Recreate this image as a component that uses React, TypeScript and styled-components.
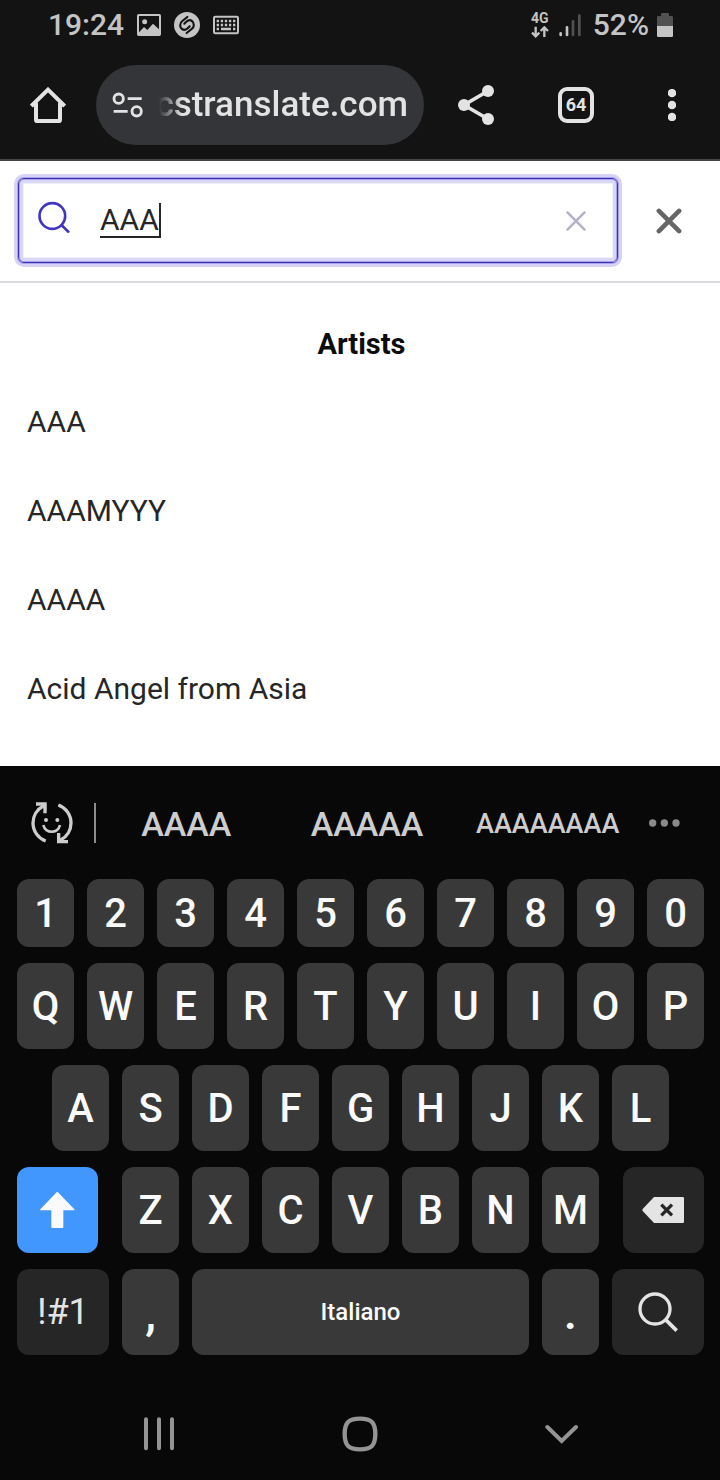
import React, { useState } from "react";
import styled, { createGlobalStyle } from "styled-components";

const GlobalStyle = createGlobalStyle`
  *, *::before, *::after { box-sizing: border-box; }
  body { margin: 0; background: #080808; font-family: Roboto, "Liberation Sans", sans-serif; }
  button, input { font-family: inherit; }
  button { border: 0; padding: 0; background: none; color: inherit; cursor: pointer; }
  svg { display: block; flex: none; }
  h2, ul { margin: 0; padding: 0; }
`;

const Screen = styled.div`
  display: flex;
  flex-direction: column;
  min-height: 100vh;
  background: #fff;
`;

/* Status bar */

const StatusBar = styled.header`
  display: flex;
  align-items: center;
  justify-content: space-between;
  height: 50px;
  padding: 0 47px 0 48px;
  background: #131313;
  color: #c4c4c4;
`;

const StatusGroup = styled.div<{ $gap: number }>`
  display: flex;
  align-items: center;
  gap: ${(p) => p.$gap}px;
`;

const StatusText = styled.span`
  font-size: 30px;
  line-height: 48px;
  font-weight: 500;
`;

const Network = styled.span`
  display: flex;
  flex-direction: column;
  align-items: center;
  gap: 2px;
  font-size: 14px;
  line-height: 12px;
  font-weight: 700;
`;

/* Browser toolbar */

const BrowserBar = styled.nav`
  display: flex;
  align-items: center;
  height: 111px;
  border-bottom: 2px solid #454545;
  background: #131313;
  color: #e3e3e3;
`;

const BarButton = styled.button<{ $width: number }>`
  display: flex;
  align-items: center;
  justify-content: center;
  flex: none;
  width: ${(p) => p.$width}px;
  height: 80px;
`;

const AddressPill = styled.button`
  display: flex;
  align-items: center;
  flex: 1;
  min-width: 0;
  height: 80px;
  padding: 0 16px;
  gap: 9px;
  border-radius: 40px;
  background: #343538;
`;

const Address = styled.span`
  display: flex;
  justify-content: flex-end;
  flex: 1;
  min-width: 0;
  overflow: hidden;
  font-size: 35px;
  line-height: 48px;
  font-weight: 500;
  mask-image: linear-gradient(to right, transparent 7px, #000 30px);
`;

const TabCount = styled.span`
  display: flex;
  align-items: center;
  justify-content: center;
  width: 36px;
  height: 36px;
  border: 4px solid #e3e3e3;
  border-radius: 9px;
  font-size: 18px;
  font-weight: 700;
`;

/* Web page */

const SearchHeader = styled.form`
  display: flex;
  align-items: center;
  height: 122px;
  padding: 0 0 1px 18px;
  border-bottom: 2px solid #dcdce0;
`;

const SearchBox = styled.label`
  display: flex;
  align-items: center;
  flex: 1;
  min-width: 0;
  height: 85px;
  padding: 0 11px 0 19px;
  border: 1px solid #3c31b4;
  border-radius: 6px;
  color: #4036c0;
  box-shadow: 0 0 0 1px #a8a2e8, 0 0 0 4px #d6d3f4,
    inset 0 0 0 1px #a8a2e8, inset 0 0 0 4px #d9d6f6, inset 0 0 0 5px #f0effc;
`;

const SearchInput = styled.input`
  field-sizing: content;
  max-width: 100%;
  height: 35px;
  padding: 0;
  margin-left: 30px;
  border: 0 solid #262626;
  border-width: 0 2px 2px 0;
  outline: 0;
  background: none;
  color: #262626;
  font-size: 30px;
  line-height: 33px;
`;

const ClearButton = styled.button`
  display: flex;
  align-items: center;
  justify-content: center;
  flex: none;
  width: 60px;
  height: 60px;
  margin-left: auto;
  color: #b3b1c9;
`;

const CloseButton = styled(ClearButton)`
  width: 102px;
  color: #666;
`;

const Results = styled.main`
  flex: 1;
  padding: 41px 27px 32px;
`;

const ResultsTitle = styled.h2`
  padding: 0 0 13px 3px;
  color: #0c0c0c;
  font-size: 29px;
  line-height: 40px;
  font-weight: 700;
  text-align: center;
`;

const ResultList = styled.ul`
  list-style: none;
`;

const ResultLink = styled.a`
  display: flex;
  align-items: center;
  min-height: 89px;
  color: #262626;
  font-size: 30px;
  text-decoration: none;
`;

/* Keyboard */

const Keyboard = styled.section`
  padding-bottom: 33px;
  background: #080808;
  color: #fafafa;
`;

const SuggestionBar = styled.div`
  display: flex;
  align-items: center;
  height: 113px;
  padding: 0 30px 0 10px;
  color: #cdcdcd;
`;

const Divider = styled.span`
  width: 2px;
  height: 40px;
  background: #8c8c8c;
`;

const Suggestion = styled.button<{ $compact?: boolean }>`
  flex: 1;
  padding-top: 3px;
  font-size: ${(p) => (p.$compact ? 27 : 34)}px;
  line-height: 48px;
  font-weight: 500;
`;

const Rows = styled.div`
  display: flex;
  flex-direction: column;
  gap: 16px;
  padding: 0 16px 0 17px;
`;

const KeyRow = styled.div<{ $inset?: boolean }>`
  display: flex;
  gap: 13px;
  padding: 0 ${(p) => (p.$inset ? 35 : 0)}px;
`;

type KeyTone = "letter" | "function" | "active";

const keyColors: Record<KeyTone, string> = {
  letter: "#393939",
  function: "#262626",
  active: "#4297ff",
};

const Key = styled.button<{
  $tone?: KeyTone;
  $weight?: number;
  $short?: boolean;
  $size?: number;
}>`
  display: flex;
  align-items: center;
  justify-content: center;
  flex: ${(p) => p.$weight ?? 57} 1 0;
  min-width: 0;
  height: ${(p) => (p.$short ? 68 : 86)}px;
  border-radius: 12px;
  background: ${(p) => keyColors[p.$tone ?? "letter"]};
  color: ${(p) => (p.$tone === "function" ? "#e4e4e4" : "#fafafa")};
  font-size: ${(p) => p.$size ?? 40}px;
  font-weight: ${(p) => (p.$tone === "function" ? 400 : 500)};
`;

const ShiftKey = styled(Key)`
  margin-right: 11px;
`;

const BackspaceKey = styled(Key)`
  margin-left: 11px;
`;

const SystemNav = styled.nav`
  display: flex;
  height: 92px;
  padding: 0 58px;
  background: #080808;
  color: #949494;
`;

const NavButton = styled.button`
  display: flex;
  align-items: center;
  justify-content: center;
  flex: 1;
`;

/* Icons */

const PictureIcon = () => (
  <svg width="24" height="22" viewBox="0 0 72 66" fill="currentColor" aria-hidden="true">
    <path fillRule="evenodd" d="M5 0H67Q72 0 72 5V61Q72 66 67 66H5Q0 66 0 61V5Q0 0 5 0ZM6 6V55L21 39L31 48L48 29L66 46V6Z" />
    <circle cx="23" cy="23" r="7.500" />
  </svg>
);

const ShazamIcon = () => (
  <svg width="26" height="26" viewBox="0 0 78 78" aria-hidden="true">
    <circle cx="39" cy="39" r="39" fill="currentColor" />
    <g fill="none" stroke="#131313" strokeWidth="6.500" strokeLinecap="round">
      <path d="M40 15L25 27C16 34 17 45 24 51C31 56 38 53 43 47L47 43" />
      <path d="M38 63L53 51C62 44 61 33 54 27C47 22 40 25 35 31L31 35" />
    </g>
  </svg>
);

const KeyboardIcon = () => (
  <svg width="26" height="20" viewBox="0 0 78 60" aria-hidden="true">
    <rect x="3" y="5" width="72" height="50" rx="4" fill="none" stroke="currentColor" strokeWidth="6" />
    <path d="M11 18H68M11 30H68" stroke="currentColor" strokeWidth="7" strokeDasharray="7 5.250" />
    <path d="M11 42H18M24 42H54M60 42H67" stroke="currentColor" strokeWidth="7" />
  </svg>
);

const DataArrows = () => (
  <svg width="18" height="12" viewBox="0 0 54 36" fill="none" stroke="currentColor" strokeWidth="7" aria-hidden="true">
    <path d="M14 2V30M3 20L14 31L25 20" />
    <path d="M40 33V6M29 15L40 4L51 15" />
  </svg>
);

const SignalIcon = () => (
  <svg width="22" height="24" viewBox="0 0 66 72" strokeWidth="8" strokeLinecap="round" aria-hidden="true">
    <path d="M5 61V66M24 43V66" stroke="currentColor" />
    <path d="M42 25V66M61 8V66" stroke="#515151" />
  </svg>
);

const BatteryIcon = () => (
  <svg width="16" height="24" viewBox="0 0 48 72" aria-hidden="true">
    <path d="M12 9V3Q12 0 15 0H33Q36 0 36 3V9H44Q48 9 48 13V39H0V13Q0 9 4 9Z" fill="#515151" />
    <path d="M0 39H48V68Q48 72 44 72H4Q0 72 0 68Z" fill="currentColor" />
  </svg>
);

const HomeIcon = () => (
  <svg width="36" height="36" viewBox="0 0 108 108" fill="none" stroke="currentColor" strokeWidth="12" aria-hidden="true">
    <path d="M18 48V98Q18 102 22 102H86Q90 102 90 98V48" />
    <path d="M4 57L54 8L104 57" />
  </svg>
);

const TuneIcon = () => (
  <svg width="31" height="26" viewBox="0 0 93 78" fill="none" stroke="currentColor" strokeWidth="8.500" aria-hidden="true">
    <circle cx="20" cy="20" r="14" />
    <path d="M47 20H89M5 58H47" />
    <circle cx="74" cy="58" r="14" />
  </svg>
);

const ShareIcon = () => (
  <svg width="36" height="40" viewBox="0 0 108 120" fill="currentColor" aria-hidden="true">
    <path d="M90 18L18 60L90 102" fill="none" stroke="currentColor" strokeWidth="11" />
    <circle cx="90" cy="18" r="18" />
    <circle cx="18" cy="60" r="18" />
    <circle cx="90" cy="102" r="18" />
  </svg>
);

const KebabIcon = () => (
  <svg width="8" height="32" viewBox="0 0 24 96" fill="currentColor" aria-hidden="true">
    <circle cx="12" cy="12" r="12.500" />
    <circle cx="12" cy="48" r="12.500" />
    <circle cx="12" cy="84" r="12.500" />
  </svg>
);

const SearchIcon = () => (
  <svg width="32" height="40" viewBox="0 0 96 120" fill="none" stroke="currentColor" strokeWidth="8" strokeLinecap="round" aria-hidden="true">
    <circle cx="43" cy="45" r="38.500" />
    <path d="M71 73L91 92" />
  </svg>
);

const CrossIcon = ({ size, stroke }: { size: number; stroke: number }) => (
  <svg width={size} height={size} viewBox="0 0 72 72" fill="none" stroke="currentColor" strokeWidth={stroke} strokeLinecap="round" aria-hidden="true">
    <path d="M8 8L64 64M64 8L8 64" />
  </svg>
);

const EmojiSwapIcon = () => (
  <svg width="42" height="42" viewBox="0 0 126 126" fill="none" stroke="currentColor" strokeWidth="10" aria-hidden="true">
    <path d="M44 117C22 109 6 88 6 63C6 42 18 22 37 12" />
    <path d="M82 9C104 17 120 38 120 63C120 84 108 104 89 114" />
    <path d="M15 6H42V34" />
    <path d="M26 4H46V26Z" fill="currentColor" stroke="none" />
    <path d="M111 119H83V93" />
    <path d="M79 100V122H99Z" fill="currentColor" stroke="none" />
    <path d="M37 69C43 96 81 96 87 69" strokeWidth="8" />
    <circle cx="45" cy="54" r="6" fill="currentColor" stroke="none" />
    <circle cx="79" cy="54" r="6" fill="currentColor" stroke="none" />
  </svg>
);

const MoreIcon = () => (
  <svg width="31" height="8" viewBox="0 0 93 24" fill="#8a8a8a" aria-hidden="true">
    <circle cx="11" cy="12" r="11" />
    <circle cx="46" cy="12" r="11" />
    <circle cx="81" cy="12" r="11" />
  </svg>
);

const ShiftIcon = () => (
  <svg width="36" height="36" viewBox="0 0 108 108" fill="currentColor" aria-hidden="true">
    <path d="M50 1Q52-1 54 1L103 52Q105 55 102 55H70V105Q70 108 67 108H37Q34 108 34 105V55H2Q-1 55 1 52Z" />
  </svg>
);

const BackspaceIcon = () => (
  <svg width="44" height="26" viewBox="0 0 132 78" aria-hidden="true">
    <path d="M36 0H122Q126 0 126 4V74Q126 78 122 78H36L2 42Q0 39 2 36Z" fill="currentColor" />
    <path d="M58 23L90 55M90 23L58 55" stroke="#262626" strokeWidth="10" />
  </svg>
);

const KeySearchIcon = () => (
  <svg width="40" height="40" viewBox="0 0 120 120" fill="none" stroke="currentColor" strokeWidth="10" aria-hidden="true">
    <circle cx="51" cy="51" r="45" />
    <path d="M82 82L116 116" strokeWidth="11" />
  </svg>
);

const RecentsIcon = () => (
  <svg width="32" height="34" viewBox="0 0 96 102" stroke="currentColor" strokeWidth="12" strokeLinecap="round" aria-hidden="true">
    <path d="M9 7V94M48 7V94M87 7V94" />
  </svg>
);

const HomeSquareIcon = () => (
  <svg width="36" height="36" viewBox="0 0 108 108" fill="none" stroke="currentColor" strokeWidth="13" aria-hidden="true">
    <path d="M54 8C88 8 100 20 100 54S88 100 54 100S8 88 8 54S20 8 54 8Z" />
  </svg>
);

const HideIcon = () => (
  <svg width="34" height="20" viewBox="0 0 102 60" fill="none" stroke="currentColor" strokeWidth="12" strokeLinecap="round" aria-hidden="true">
    <path d="M10 9L53 51L96 9" />
  </svg>
);

const artists = ["AAA", "AAAMYYY", "AAAA", "Acid Angel from Asia"];

export default function App() {
  const [query, setQuery] = useState("AAA");
  const type = (character: string) => () => setQuery((q) => q + character);
  const letters = (row: string) =>
    row.split("").map((letter) => (
      <Key type="button" key={letter} onClick={type(letter)}>
        {letter}
      </Key>
    ));

  return (
    <Screen>
      <GlobalStyle />
      <StatusBar>
        <StatusGroup $gap={13}>
          <StatusText>19:24</StatusText>
          <PictureIcon />
          <ShazamIcon />
          <KeyboardIcon />
        </StatusGroup>
        <StatusGroup $gap={12}>
          <StatusGroup $gap={10}>
            <Network>
              4G
              <DataArrows />
            </Network>
            <SignalIcon />
          </StatusGroup>
          <StatusGroup $gap={8}>
            <StatusText>52%</StatusText>
            <BatteryIcon />
          </StatusGroup>
        </StatusGroup>
      </StatusBar>

      <BrowserBar aria-label="Browser">
        <BarButton type="button" $width={96} aria-label="Home">
          <HomeIcon />
        </BarButton>
        <AddressPill type="button">
          <TuneIcon />
          <Address>cstranslate.com</Address>
        </AddressPill>
        <BarButton type="button" $width={104} aria-label="Share">
          <ShareIcon />
        </BarButton>
        <BarButton type="button" $width={96} aria-label="Tabs">
          <TabCount>64</TabCount>
        </BarButton>
        <BarButton type="button" $width={96} aria-label="Menu">
          <KebabIcon />
        </BarButton>
      </BrowserBar>

      <SearchHeader onSubmit={(e) => e.preventDefault()}>
        <SearchBox htmlFor="query">
          <SearchIcon />
          <SearchInput
            id="query"
            type="text"
            aria-label="Search"
            autoComplete="off"
            value={query}
            onChange={(e) => setQuery(e.target.value)}
          />
          <ClearButton type="button" aria-label="Clear" onClick={() => setQuery("")}>
            <CrossIcon size={22} stroke={8} />
          </ClearButton>
        </SearchBox>
        <CloseButton type="button" aria-label="Close search">
          <CrossIcon size={26} stroke={13} />
        </CloseButton>
      </SearchHeader>

      <Results>
        <ResultsTitle>Artists</ResultsTitle>
        <ResultList>
          {artists.map((artist) => (
            <li key={artist}>
              <ResultLink href="#">{artist}</ResultLink>
            </li>
          ))}
        </ResultList>
      </Results>

      <Keyboard aria-label="Keyboard">
        <SuggestionBar>
          <BarButton type="button" $width={84} aria-label="Emoji">
            <EmojiSwapIcon />
          </BarButton>
          <Divider />
          <Suggestion type="button">AAAA</Suggestion>
          <Suggestion type="button">AAAAA</Suggestion>
          <Suggestion type="button" $compact>
            AAAAAAAA
          </Suggestion>
          <BarButton type="button" $width={52} aria-label="More suggestions">
            <MoreIcon />
          </BarButton>
        </SuggestionBar>
        <Rows>
          <KeyRow>
            {"1234567890".split("").map((digit) => (
              <Key type="button" key={digit} $short onClick={type(digit)}>
                {digit}
              </Key>
            ))}
          </KeyRow>
          <KeyRow>{letters("QWERTYUIOP")}</KeyRow>
          <KeyRow $inset>{letters("ASDFGHJKL")}</KeyRow>
          <KeyRow>
            <ShiftKey type="button" $tone="active" $weight={81} aria-label="Shift">
              <ShiftIcon />
            </ShiftKey>
            {letters("ZXCVBNM")}
            <BackspaceKey
              type="button"
              $tone="function"
              $weight={81}
              aria-label="Backspace"
              onClick={() => setQuery((q) => q.slice(0, -1))}
            >
              <BackspaceIcon />
            </BackspaceKey>
          </KeyRow>
          <KeyRow>
            <Key type="button" $tone="function" $weight={92} $size={36}>
              !#1
            </Key>
            <Key type="button" $size={48} onClick={type(",")}>
              ,
            </Key>
            <Key type="button" $weight={337} $size={24} onClick={type(" ")}>
              Italiano
            </Key>
            <Key type="button" $size={48} onClick={type(".")}>
              .
            </Key>
            <Key type="button" $tone="function" $weight={92} aria-label="Search">
              <KeySearchIcon />
            </Key>
          </KeyRow>
        </Rows>
      </Keyboard>

      <SystemNav aria-label="System">
        <NavButton type="button" aria-label="Recent apps">
          <RecentsIcon />
        </NavButton>
        <NavButton type="button" aria-label="Home screen">
          <HomeSquareIcon />
        </NavButton>
        <NavButton type="button" aria-label="Hide keyboard">
          <HideIcon />
        </NavButton>
      </SystemNav>
    </Screen>
  );
}
